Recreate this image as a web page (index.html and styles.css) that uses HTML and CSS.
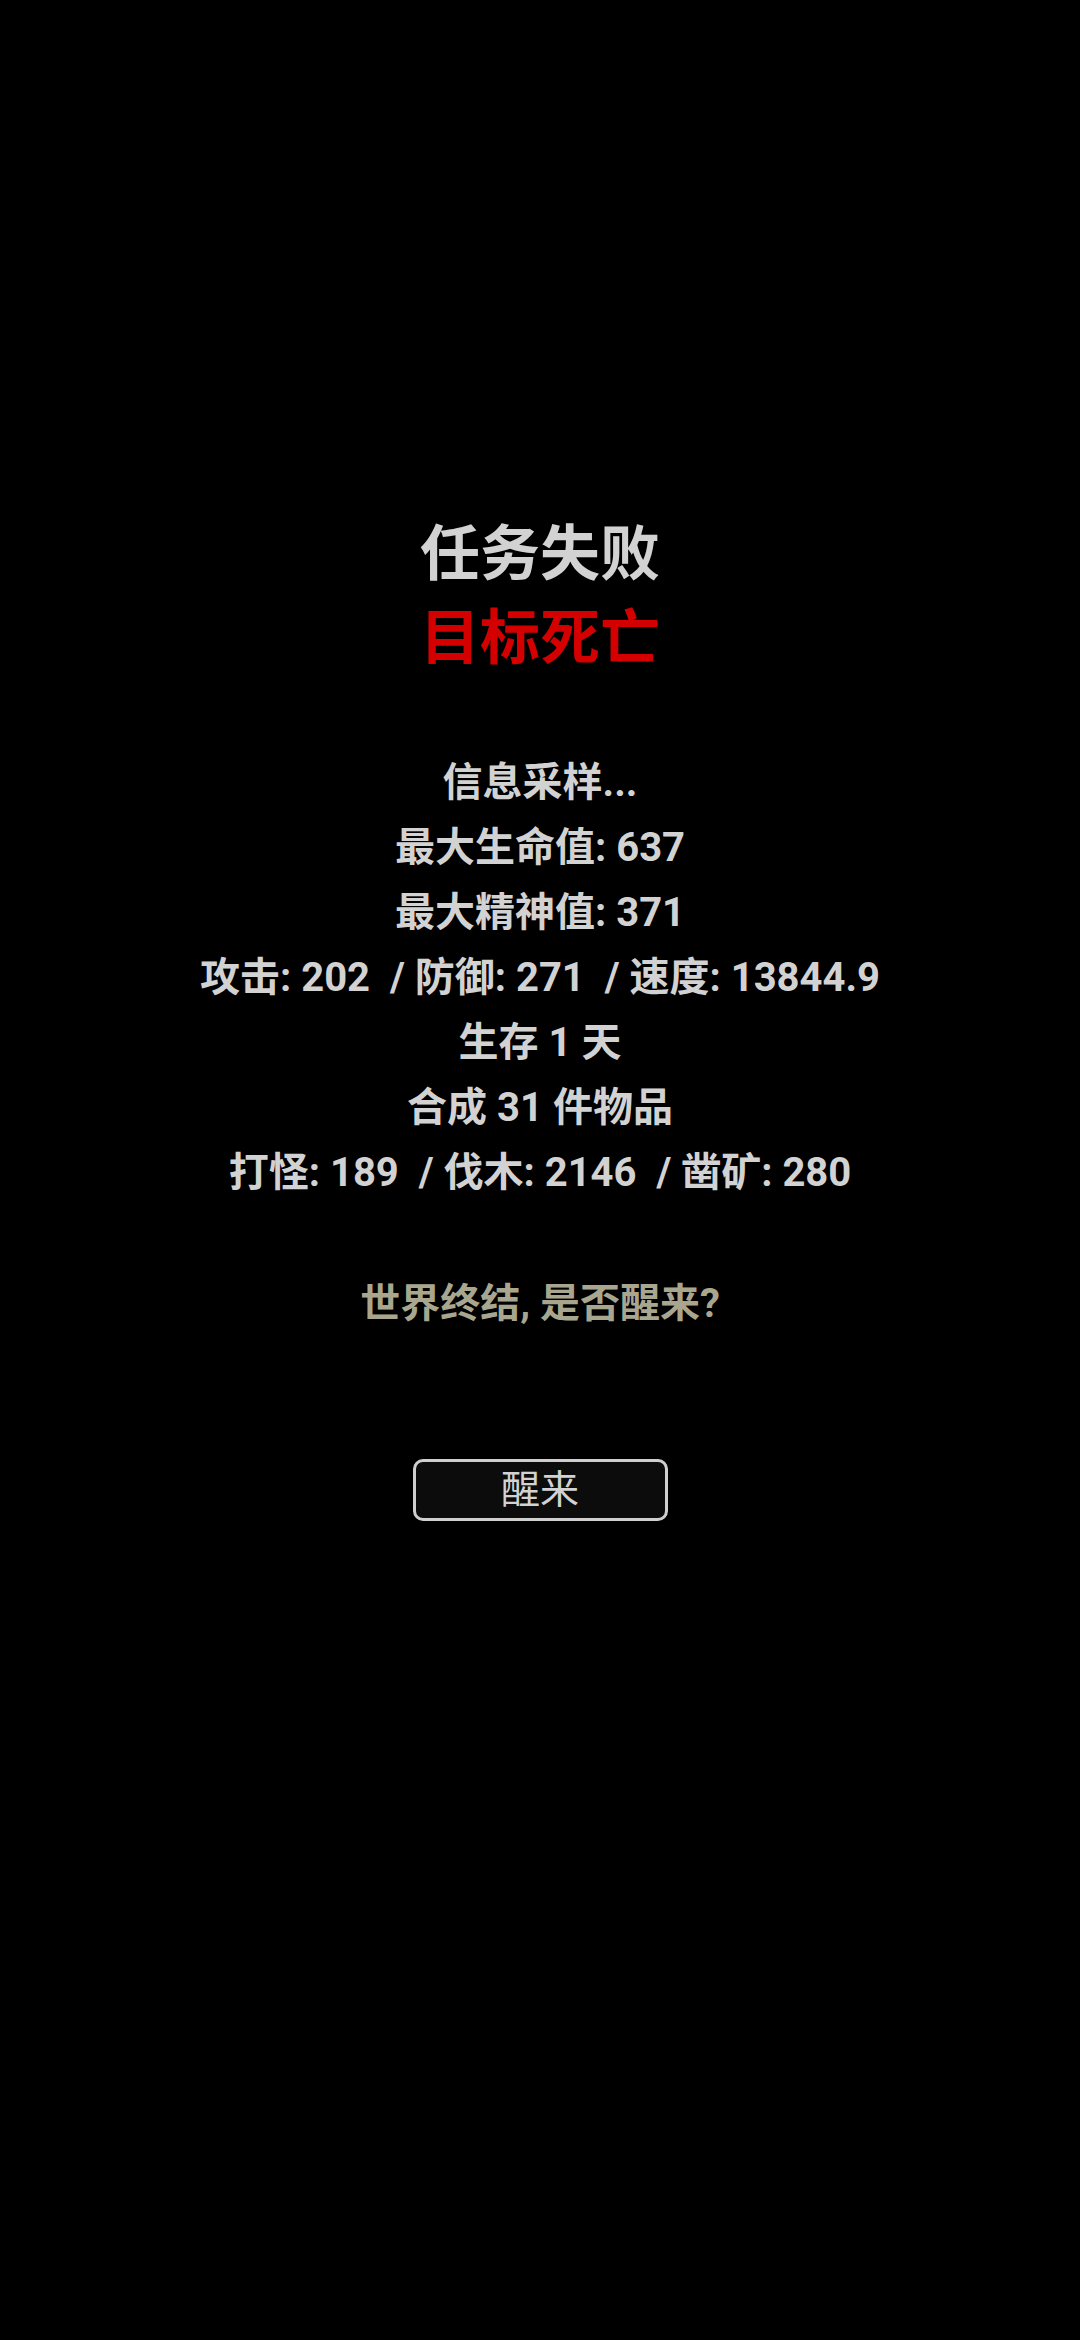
FILE: index.html
```html
<!DOCTYPE html>
<html lang="zh-CN">
<head>
<meta charset="utf-8">
<title>任务失败</title>
<link rel="stylesheet" href="styles.css">
</head>
<body>
<main class="screen">
  <section class="header">
    <h1 class="title">任务失败</h1>
    <h2 class="cause">目标死亡</h2>
  </section>
  <section class="stats">
    <p class="line">信息采样...</p>
    <p class="line">最大生命值: 637</p>
    <p class="line">最大精神值: 371</p>
    <p class="line">攻击: 202 &nbsp;/ 防御: 271 &nbsp;/ 速度: 13844.9</p>
    <p class="line">生存 1 天</p>
    <p class="line">合成 31 件物品</p>
    <p class="line">打怪: 189 &nbsp;/ 伐木: 2146 &nbsp;/ 凿矿: 280</p>
  </section>
  <p class="question">世界终结, 是否醒来?</p>
  <button class="wake" type="button">醒来</button>
</main>
</body>
</html>
```
FILE: styles.css
```css
html, body {
  margin: 0;
  padding: 0;
  background: #000;
}
body {
  width: 1080px;
  height: 2340px;
  font-family: Roboto, "Noto Sans CJK SC", sans-serif;
  color: #d2d2d2;
}
.screen {
  display: flex;
  flex-direction: column;
  align-items: center;
  padding-top: 513px;
}
.header {
  display: flex;
  flex-direction: column;
  align-items: center;
}
.title, .cause {
  margin: 0;
  font-size: 60px;
  line-height: 84px;
  font-weight: 700;
}
.title {
  color: #d2d2d2;
}
.cause {
  color: #d40000;
}
.stats {
  margin-top: 69px;
  display: flex;
  flex-direction: column;
  align-items: center;
}
.line {
  margin: 0;
  font-size: 40px;
  line-height: 65px;
  font-weight: 700;
  white-space: nowrap;
}
.question {
  margin: 66px 0 0;
  font-size: 40px;
  line-height: 65px;
  font-weight: 700;
  color: #a9a690;
}
.wake {
  margin-top: 123px;
  width: 255px;
  height: 62px;
  box-sizing: border-box;
  background: #0c0c0c;
  border: 3px solid #cfcfcf;
  border-radius: 10px;
  color: #d2d2d2;
  font-family: Roboto, "Noto Sans CJK SC", sans-serif;
  font-size: 39px;
  font-weight: 400;
  line-height: 1;
  padding: 0;
  display: flex;
  align-items: center;
  justify-content: center;
}
```
